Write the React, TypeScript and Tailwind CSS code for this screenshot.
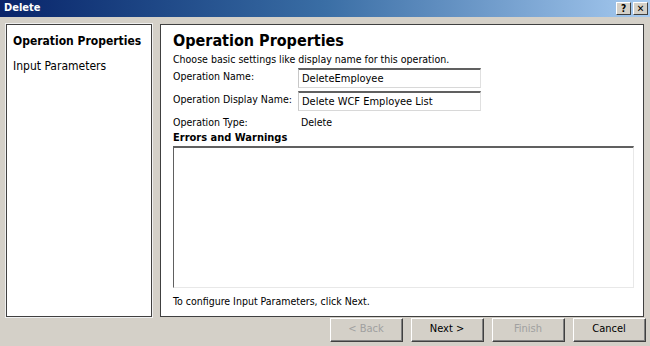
import React from "react";

const font = { fontFamily: '"DejaVu Sans Condensed", "DejaVu Sans", Tahoma, sans-serif' };

function Btn({ label, disabled }: { label: string; disabled?: boolean }) {
  return (
    <div className="w-[73px] h-[24px] border-t border-l border-t-white border-l-white border-r border-b border-r-[#404040] border-b-[#404040] bg-[#d4d0c8]">
      <div className="w-full h-full border-r border-b border-r-[#808080] border-b-[#808080] flex items-center justify-center">
        <span className={`text-[11px] ${disabled ? "text-[#a0a0a0]" : "text-black"}`}>{label}</span>
      </div>
    </div>
  );
}

function Field({ value }: { value: string }) {
  return (
    <div className="w-[183px] h-[20px] bg-white border-t-2 border-t-[#606060] border-l border-l-[#c8c8c8] border-r border-r-[#e0e0e0] border-b border-b-[#d8d8d8] flex items-center px-[3px]">
      <span className="text-[11px] text-black leading-none">{value}</span>
    </div>
  );
}

export default function App() {
  return (
    <div className="w-[650px] h-[346px] bg-[#d4d0c8] flex flex-col overflow-hidden" style={font}>
      <div className="h-[17px] shrink-0 flex items-center justify-between pl-[4px] pr-[2px] bg-gradient-to-r from-[#0a246a] via-[#3a6ea5] to-[#a6caf0]">
        <span className="text-white font-bold text-[11px]">Delete</span>
        <div className="flex gap-[2px]">
          <div className="w-[15px] h-[13px] bg-[#d4d0c8] border-t border-l border-white border-r border-b border-r-[#404040] border-b-[#404040] flex items-center justify-center text-[10px] font-bold leading-none">?</div>
          <div className="w-[15px] h-[13px] bg-[#d4d0c8] border-t border-l border-white border-r border-b border-r-[#404040] border-b-[#404040] flex items-center justify-center text-[10px] font-bold leading-none">✕</div>
        </div>
      </div>
      <div className="flex gap-[8px] px-[6px] pt-[7px] h-[300px] shrink-0">
        <div className="w-[147px] h-full bg-white border border-[#404040] outline outline-1 outline-[#f0f0f0] px-[6px] pt-[7px]">
          <div className="text-[12px] font-bold text-black">Operation Properties</div>
          <div className="text-[12px] text-black mt-[7px]">Input Parameters</div>
        </div>
        <div className="w-[484px] h-full bg-white border border-[#404040] px-[12px] pt-[5px] flex flex-col">
          <div className="text-[16px] font-bold text-black leading-[22px]">Operation Properties</div>
          <div className="text-[10.5px] text-black leading-[14px]">Choose basic settings like display name for this operation.</div>
          <div className="flex items-start mt-[2px]">
            <span className="w-[125px] text-[10.5px] pt-[1px]">Operation Name:</span>
            <Field value="DeleteEmployee" />
          </div>
          <div className="flex items-start mt-[3px]">
            <span className="w-[125px] text-[10.5px] pt-[1px]">Operation Display Name:</span>
            <Field value="Delete WCF Employee List" />
          </div>
          <div className="flex items-start mt-[4px]">
            <span className="w-[128px] text-[10.5px]">Operation Type:</span>
            <span className="text-[10.5px]">Delete</span>
          </div>
          <div className="text-[11px] font-bold mt-[0px] leading-[14px]">Errors and Warnings</div>
          <div className="w-[461px] h-[142px] mt-[1px] border-t-2 border-l border-t-[#606060] border-l-[#606060] border-r border-b border-r-[#e8e8e8] border-b-[#e8e8e8] bg-white"></div>
          <div className="text-[10.5px] mt-[6px]">To configure Input Parameters, click Next.</div>
        </div>
      </div>
      <div className="flex justify-end gap-[8px] pr-[4px] pt-[1px]">
        <Btn label="< Back" disabled />
        <Btn label="Next >" />
        <Btn label="Finish" disabled />
        <Btn label="Cancel" />
      </div>
    </div>
  );
}
